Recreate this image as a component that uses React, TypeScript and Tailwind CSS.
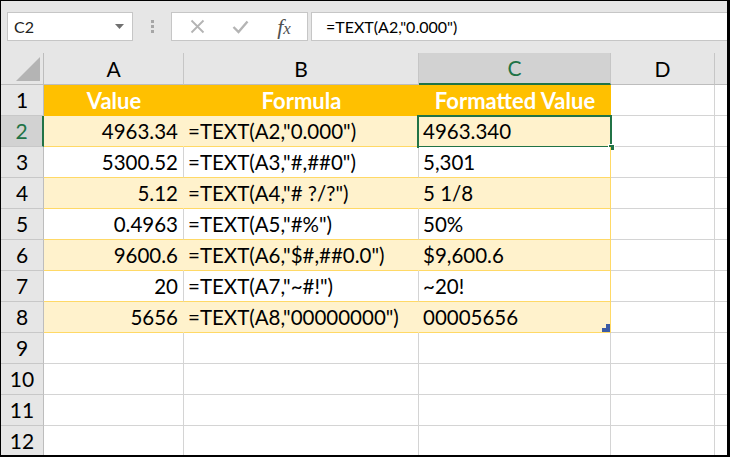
import React from "react";

const rows: [string, string, string][] = [
  ["4963.34", '=TEXT(A2,"0.000")', "4963.340"],
  ["5300.52", '=TEXT(A3,"#,##0")', "5,301"],
  ["5.12", '=TEXT(A4,"# ?/?")', "5 1/8"],
  ["0.4963", '=TEXT(A5,"#%")', "50%"],
  ["9600.6", '=TEXT(A6,"$#,##0.0")', "$9,600.6"],
  ["20", '=TEXT(A7,"~#!")', "~20!"],
  ["5656", '=TEXT(A8,"00000000")', "00005656"],
];

const font = { fontFamily: "Lato, 'Open Sans', sans-serif" };

function RowHead({ n, selected }: { n: number; selected?: boolean }) {
  return (
    <div
      className={
        selected
          ? "w-[43px] shrink-0 h-full flex items-center justify-center bg-[#d2d2d2] text-[#217346] border-r-2 border-r-[#217346] border-b border-b-[#c8c8c8] text-[21px]"
          : "w-[43px] shrink-0 h-full flex items-center justify-center bg-[#e6e6e6] text-black border-r border-r-[#bdbdbd] border-b border-b-[#c8c8c8] text-[21px]"
      }
    >
      {n}
    </div>
  );
}

export default function App() {
  return (
    <div
      className="w-[730px] h-[457px] overflow-hidden border-t border-l border-r-[3px] border-b-2 border-black bg-[#e6e6e6] flex flex-col"
      style={font}
    >
      {/* toolbar */}
      <div className="h-[52px] shrink-0 flex items-start pt-[11px] pl-[6px]">
        <div className="w-[126px] h-[29px] bg-white border border-[#c6c6c6] flex items-center justify-between pl-[6px] pr-[8px]">
          <span className="text-[16px] text-[#222]">C2</span>
          <svg width="9" height="5" viewBox="0 0 9 5">
            <polygon points="0,0 9,0 4.5,5" fill="#707070" />
          </svg>
        </div>
        <div className="w-[38px] h-[29px] flex flex-col items-center justify-center gap-[2px]">
          <div className="w-[3px] h-[3px] bg-[#a6a6a6]" />
          <div className="w-[3px] h-[3px] bg-[#a6a6a6]" />
          <div className="w-[3px] h-[3px] bg-[#a6a6a6]" />
        </div>
        <div className="w-[137px] h-[29px] bg-white border border-[#c6c6c6] flex items-center">
          <div className="w-[48px] flex justify-center pl-[3px]">
            <svg width="15" height="15" viewBox="0 0 15 15">
              <path d="M1.5 1.5 L13.5 13.5 M13.5 1.5 L1.5 13.5" stroke="#b4b4b4" strokeWidth="1.8" fill="none" />
            </svg>
          </div>
          <div className="w-[40px] flex justify-center">
            <svg width="17" height="14" viewBox="0 0 17 14">
              <path d="M1.5 7 L6.5 12 L15.5 1.5" stroke="#b4b4b4" strokeWidth="2.4" fill="none" />
            </svg>
          </div>
          <div className="w-[46px] flex justify-center pl-[2px]">
            <span
              className="text-[22px] italic text-[#505050] leading-none"
              style={{ fontFamily: "'Liberation Serif', 'DejaVu Serif', serif" }}
            >
              f<span className="text-[17px]">x</span>
            </span>
          </div>
        </div>
        <div className="ml-[3px] flex-1 h-[29px] bg-white border border-r-0 border-[#c6c6c6] flex items-center pl-[14px]">
          <span className="text-[16px] text-black">=TEXT(A2,"0.000")</span>
        </div>
      </div>

      {/* column headers */}
      <div className="h-[32px] shrink-0 flex text-[21px] text-black">
        <div className="w-[43px] shrink-0 h-full bg-[#e6e6e6] border-r border-r-[#bdbdbd] border-b border-b-[#bdbdbd] flex items-end justify-end pr-[3px] pb-[3px]">
          <svg width="24" height="24" viewBox="0 0 24 24">
            <polygon points="24,0 24,24 0,24" fill="#b4b4b4" />
          </svg>
        </div>
        <div className="w-[140px] shrink-0 h-full flex items-center justify-center border-r border-r-[#c6c6c6] border-b border-b-[#bdbdbd]">A</div>
        <div className="w-[235px] shrink-0 h-full flex items-center justify-center border-r border-r-[#c6c6c6] border-b border-b-[#bdbdbd]">B</div>
        <div className="w-[192px] shrink-0 h-full flex items-center justify-center bg-[#d2d2d2] text-[#217346] border-r border-r-[#c6c6c6] border-b-2 border-b-[#217346]">C</div>
        <div className="w-[104px] shrink-0 h-full flex items-center justify-center border-r border-r-[#c6c6c6] border-b border-b-[#bdbdbd]">D</div>
        <div className="flex-1 h-full border-b border-b-[#bdbdbd]" />
      </div>

      {/* row 1 */}
      <div className="h-[31px] shrink-0 flex bg-white">
        <RowHead n={1} />
        <div className="w-[140px] shrink-0 h-full bg-[#ffc000] flex items-center justify-center text-white font-bold text-[22px]">Value</div>
        <div className="w-[235px] shrink-0 h-full bg-[#ffc000] flex items-center justify-center text-white font-bold text-[22px]">Formula</div>
        <div className="w-[192px] shrink-0 h-full bg-[#ffc000] flex items-center justify-center text-white font-bold text-[22px]">Formatted Value</div>
        <div className="w-[104px] shrink-0 h-full border-r border-b border-[#d4d4d4]" />
        <div className="flex-1 h-full border-b border-[#d4d4d4]" />
      </div>

      {rows.map((r, i) => {
        const band = i % 2 === 0;
        const n = i + 2;
        const bg = band ? "bg-[#fff2cc]" : "bg-white";
        const vr = band ? "border-r-[#fff2cc]" : "border-r-[#d4d4d4]";
        const cells = [
          <div key="a" className={`w-[140px] shrink-0 h-full ${bg} border-r ${vr} border-b border-b-[#ffd966] flex items-center justify-end pr-[5px] text-[20.5px] text-black`}>{r[0]}</div>,
          <div key="b" className={`w-[235px] shrink-0 h-full ${bg} border-r ${vr} border-b border-b-[#ffd966] flex items-center pl-[4px] text-[20.5px] text-black`}>{r[1]}</div>,
          <div key="c" className={`relative w-[192px] shrink-0 h-full ${bg} border-r border-r-[#ffd966] border-b border-b-[#ffd966] flex items-center pl-[4px] text-[20.5px] text-black`}>
            {r[2]}
            {n === 2 && (
              <div className="absolute left-[-2px] top-[-1px] right-[-2px] bottom-[-2px] border-2 border-[#217346]">
                <div className="absolute right-[-5px] bottom-[-5px] w-[7px] h-[7px] bg-[#217346] border border-white" />
              </div>
            )}
            {n === 8 && (
              <svg className="absolute right-0 bottom-0" width="8" height="8" viewBox="0 0 8 8">
                <polygon points="8,0 8,8 0,8 0,4 4,4 4,0" fill="#3b5ba5" />
              </svg>
            )}
          </div>,
        ];
        return (
          <div key={n} className="h-[31px] shrink-0 flex bg-white">
            <RowHead n={n} selected={n === 2} />
            {cells}
            <div className="w-[104px] shrink-0 h-full border-r border-b border-[#d4d4d4]" />
            <div className="flex-1 h-full border-b border-[#d4d4d4]" />
          </div>
        );
      })}

      {[9, 10, 11, 12].map((n) => (
        <div key={n} className="h-[31px] shrink-0 flex bg-white">
          <RowHead n={n} />
          <div className="w-[140px] shrink-0 h-full border-r border-b border-[#d4d4d4]" />
          <div className="w-[235px] shrink-0 h-full border-r border-b border-[#d4d4d4]" />
          <div className="w-[192px] shrink-0 h-full border-r border-b border-[#d4d4d4]" />
          <div className="w-[104px] shrink-0 h-full border-r border-b border-[#d4d4d4]" />
          <div className="flex-1 h-full border-b border-[#d4d4d4]" />
        </div>
      ))}
    </div>
  );
}
